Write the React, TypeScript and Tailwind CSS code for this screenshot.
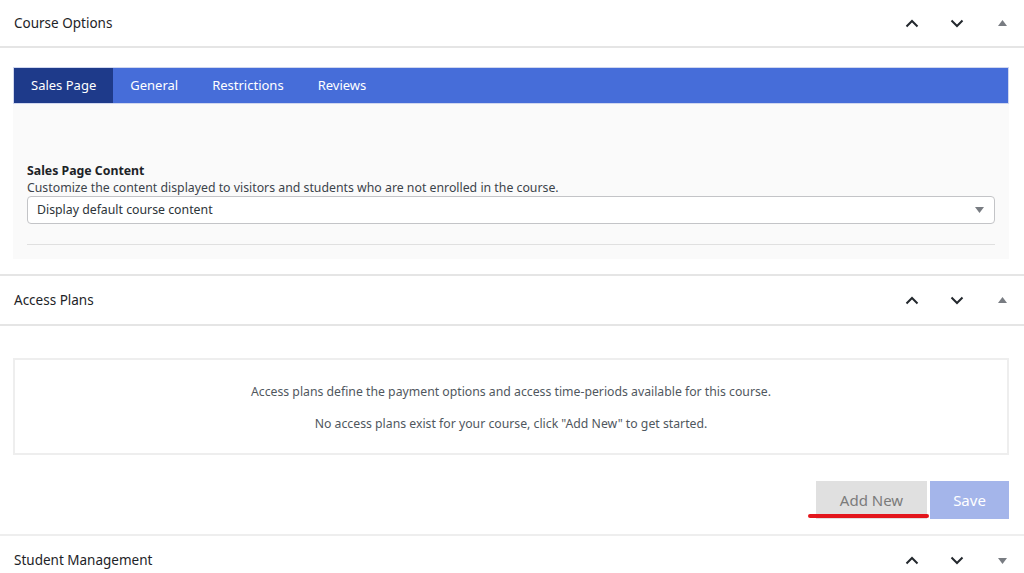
import React from 'react';

const ChevronUp = () => (
  <svg width="14" height="9" viewBox="0 0 14 9" fill="none">
    <path d="M1.5 7.5 L7 2 L12.5 7.5" stroke="#23282d" strokeWidth="2" />
  </svg>
);

const ChevronDown = () => (
  <svg width="14" height="9" viewBox="0 0 14 9" fill="none">
    <path d="M1.5 1.5 L7 7 L12.5 1.5" stroke="#23282d" strokeWidth="2" />
  </svg>
);

const Caret = ({ up = true }: { up?: boolean }) => (
  <svg width="9" height="6" viewBox="0 0 9 6">
    {up ? <path d="M0 6 L4.5 0 L9 6 Z" fill="#787c82" /> : <path d="M0 0 L4.5 6 L9 0 Z" fill="#787c82" />}
  </svg>
);

function SectionHeader({ title, open = true, className = '' }: { title: string; open?: boolean; className?: string }) {
  return (
    <div className={`flex items-center justify-between pl-[14px] pr-[17px] bg-white ${className}`}>
      <h2 className="text-[13.5px] text-[#1d2327]">{title}</h2>
      <div className="flex items-center">
        <span className="w-[44px] flex justify-center"><ChevronUp /></span>
        <span className="w-[44px] flex justify-center ml-[1px]"><ChevronDown /></span>
        <span className="w-[28px] flex justify-end"><Caret up={open} /></span>
      </div>
    </div>
  );
}

const TABS = ['Sales Page', 'General', 'Restrictions', 'Reviews'];

export default function App() {
  return (
    <div className="w-[1024px] h-[573px] overflow-hidden bg-white" style={{ fontFamily: '"Noto Sans", "Open Sans", sans-serif' }}>
      {/* Course Options */}
      <SectionHeader title="Course Options" className="h-[48px] border-b-2 border-[#e5e5e5]" />
      <div className="pl-[13px] pr-[15px] pt-[19px] pb-[15px]">
        <div className="flex h-[37px] bg-[#466dd9] border border-[#d0d7ef]">
          {TABS.map((t, i) => (
            <div
              key={t}
              className={`flex items-center px-[17px] text-[13px] text-white ${i === 0 ? 'bg-[#1e3a8a]' : ''}`}
            >
              {t}
            </div>
          ))}
        </div>
        <div className="bg-[#fafafa] px-[14px] pt-[58px] pb-[14px]">
          <div className="text-[12.3px] font-bold text-[#1d2327] leading-[18px]">Sales Page Content</div>
          <div className="text-[12.3px] text-[#3c434a] leading-[16px]">
            Customize the content displayed to visitors and students who are not enrolled in the course.
          </div>
          <div className="h-[28px] flex items-center justify-between bg-white border border-[#c3c4c7] rounded-[4px] pl-[9px] pr-[10px]">
            <span className="text-[12.3px] text-[#2c3338]">Display default course content</span>
            <Caret up={false} />
          </div>
          <div className="mt-[20px] border-t border-[#e0e0e0]" />
        </div>
      </div>

      {/* Access Plans */}
      <SectionHeader title="Access Plans" className="h-[52px] border-t-2 border-b-2 border-[#e5e5e5]" />
      <div className="pl-[13px] pr-[15px] pt-[32px]">
        <div className="border-2 border-[#eeeeee] h-[97px] flex flex-col items-center justify-center gap-[13px] pt-[3px] text-[12.25px] text-[#50575e]">
          <p>Access plans define the payment options and access time-periods available for this course.</p>
          <p>No access plans exist for your course, click "Add New" to get started.</p>
        </div>
        <div className="flex justify-end gap-[3px] pt-[26px] pb-[15px]">
          <div className="relative">
            <button className="w-[111px] h-[38px] bg-[#e0e0e0] text-[15px] text-[#7b7b7b]">Add New</button>
            <div className="absolute left-[-8px] right-[-2px] top-[33px] h-[4px] rounded-full bg-[#e3161c]" />
          </div>
          <button className="w-[79px] h-[38px] bg-[#a4b5ea] text-[15px] text-white">Save</button>
        </div>
      </div>

      {/* Student Management */}
      <SectionHeader title="Student Management" open={false} className="h-[51px] border-t-2 border-[#eeeeee]" />
    </div>
  );
}
